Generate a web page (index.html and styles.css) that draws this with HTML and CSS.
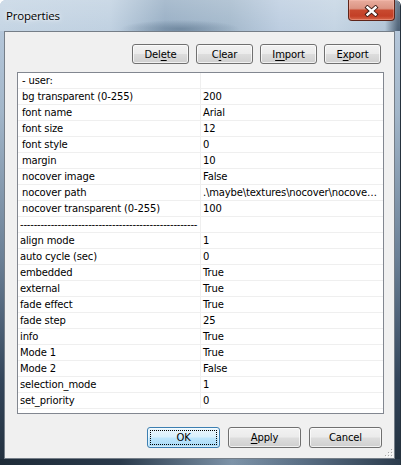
FILE: index.html
```html
<!DOCTYPE html>
<html>
<head>
<meta charset="utf-8">
<link rel="stylesheet" href="styles.css">
</head>
<body>
<div class="window">
  <div class="titlebar">
    <span class="title">Properties</span>
    <div class="close">
      <svg width="15" height="12" viewBox="0 0 15 12">
        <path d="M3.5 2.5 L11.5 9.5 M11.5 2.5 L3.5 9.5" stroke="#3a1a14" stroke-width="4.2" stroke-linecap="square" fill="none"/>
        <path d="M3.5 2.5 L11.5 9.5 M11.5 2.5 L3.5 9.5" stroke="#ffffff" stroke-width="2.4" stroke-linecap="square" fill="none"/>
      </svg>
    </div>
  </div>
  <div class="client">
    <div class="toolbar">
      <button class="btn">Del<u>e</u>te</button>
      <button class="btn">C<u>l</u>ear</button>
      <button class="btn">I<u>m</u>port</button>
      <button class="btn">E<u>x</u>port</button>
    </div>
    <div class="list">
      <div class="row"><div class="key">- user:</div><div class="val"></div></div>
      <div class="row"><div class="key">bg transparent (0-255)</div><div class="val">200</div></div>
      <div class="row"><div class="key">font name</div><div class="val">Arial</div></div>
      <div class="row"><div class="key">font size</div><div class="val">12</div></div>
      <div class="row"><div class="key">font style</div><div class="val">0</div></div>
      <div class="row"><div class="key">margin</div><div class="val">10</div></div>
      <div class="row"><div class="key">nocover image</div><div class="val">False</div></div>
      <div class="row"><div class="key">nocover path</div><div class="val">.\maybe\textures\nocover\nocove…</div></div>
      <div class="row"><div class="key">nocover transparent (0-255)</div><div class="val">100</div></div>
      <div class="row"><div class="key dash">----------------------------------------------------</div><div class="val"></div></div>
      <div class="row g2"><div class="key">align mode</div><div class="val">1</div></div>
      <div class="row g2"><div class="key">auto cycle (sec)</div><div class="val">0</div></div>
      <div class="row g2"><div class="key">embedded</div><div class="val">True</div></div>
      <div class="row g2"><div class="key">external</div><div class="val">True</div></div>
      <div class="row g2"><div class="key">fade effect</div><div class="val">True</div></div>
      <div class="row g2"><div class="key">fade step</div><div class="val">25</div></div>
      <div class="row g2"><div class="key">info</div><div class="val">True</div></div>
      <div class="row g2"><div class="key">Mode 1</div><div class="val">True</div></div>
      <div class="row g2"><div class="key">Mode 2</div><div class="val">False</div></div>
      <div class="row g2"><div class="key">selection_mode</div><div class="val">1</div></div>
      <div class="row g2"><div class="key">set_priority</div><div class="val">0</div></div>
    </div>
    <div class="footer">
      <button class="btn wide default"><span class="focus">OK</span></button>
      <button class="btn wide"><u>A</u>pply</button>
      <button class="btn wide">Cancel</button>
    </div>
    <svg class="grip" width="9" height="9" viewBox="0 0 9 9">
      <rect x="7" y="1" width="1" height="1" fill="#a6a6a6"/>
      <rect x="4" y="4" width="1" height="1" fill="#a6a6a6"/>
      <rect x="7" y="4" width="1" height="1" fill="#a6a6a6"/>
      <rect x="1" y="7" width="1" height="1" fill="#a6a6a6"/>
      <rect x="4" y="7" width="1" height="1" fill="#a6a6a6"/>
      <rect x="7" y="7" width="1" height="1" fill="#a6a6a6"/>
      <rect x="8" y="2" width="1" height="1" fill="#ffffff"/>
      <rect x="5" y="5" width="1" height="1" fill="#ffffff"/>
      <rect x="8" y="5" width="1" height="1" fill="#ffffff"/>
      <rect x="2" y="8" width="1" height="1" fill="#ffffff"/>
      <rect x="5" y="8" width="1" height="1" fill="#ffffff"/>
      <rect x="8" y="8" width="1" height="1" fill="#ffffff"/>
    </svg>
  </div>
</div>
</body>
</html>
```
FILE: styles.css
```css
* { box-sizing: border-box; }
html, body { margin: 0; padding: 0; }
body {
  background: #ffffff;
  width: 405px;
  height: 465px;
  overflow: hidden;
  font-family: "DejaVu Sans", "Liberation Sans", sans-serif;
}
.window {
  width: 401px;
  height: 465px;
  display: flex;
  flex-direction: column;
  border-radius: 6px 6px 0 0;
  border-right: 1px solid #26333f;
  background:
    linear-gradient(to right, #1e2b38 0, #2a3a4b 30%, #7d93a8 58%, #5b7086 75%, #2c3c4d 100%) left bottom / 100% 6px no-repeat,
    linear-gradient(to bottom, #bccde0 0, #a3b7ca 110px, #6a7f95 260px, #33455a 380px, #22303e 465px);
}
.titlebar {
  height: 31px;
  flex: none;
  display: flex;
  align-items: flex-start;
  padding: 0 5px 0 6px;
  border-radius: 6px 6px 0 0;
  background:
    radial-gradient(ellipse 60px 9px at 180px 29px, rgba(80,105,130,0.55), rgba(80,105,130,0)),
    linear-gradient(to bottom, rgba(255,255,255,0.18), rgba(255,255,255,0)),
    linear-gradient(to right, #c5d5e4 0, #c0d1e1 110px, #97aec4 165px, #a4b9cc 230px, #bccde0 280px, #c4d4e3 335px, #b2c5d7 385px, #4f6378 398px);
}
.title {
  margin-top: 8px;
  font-family: "Open Sans", "Noto Sans", sans-serif;
  font-size: 11.5px;
  letter-spacing: -0.2px;
  color: #000;
  text-shadow: 0 0 6px rgba(255,255,255,0.9), 0 0 3px rgba(255,255,255,0.8);
}
.close {
  margin-left: auto;
  width: 47px;
  height: 21px;
  border: 1px solid #5e2419;
  border-top: none;
  border-radius: 0 0 4px 4px;
  background: linear-gradient(to bottom, #e9ad9e 0%, #db9483 42%, #c8492f 52%, #c33f26 80%, #d7664a 100%);
  box-shadow: inset 0 0 0 1px rgba(255,200,190,0.35);
  display: flex;
  align-items: center;
  justify-content: center;
  padding-top: 1px;
}
.close svg { display: block; }
.client {
  flex: none;
  height: 428px;
  margin: 0 5px 0 4px;
  border: 1px solid rgba(35,50,66,0.6);
  background: #f0f0f0;
  display: flex;
  flex-direction: column;
  position: relative;
}
.toolbar {
  display: flex;
  justify-content: flex-end;
  gap: 7px;
  padding: 12px 13px 0 0;
}
.btn {
  width: 57px;
  height: 20px;
  margin: 0;
  padding: 0;
  border: 1px solid #707070;
  border-radius: 3px;
  background: linear-gradient(to bottom, #f2f2f2 0%, #ebebeb 48%, #dddddd 52%, #cfcfcf 100%);
  box-shadow: inset 0 0 0 1px rgba(255,255,255,0.7);
  font-family: "DejaVu Sans", sans-serif;
  font-size: 10px;
  letter-spacing: -0.15px;
  color: #000;
  line-height: 16px;
  padding-top: 1px;
}
.btn u { text-decoration: underline; text-underline-offset: 2px; }
.btn.wide { width: 73px; height: 21px; }
.btn.default {
  border-color: #3c7fb1;
  background: linear-gradient(to bottom, #eaf6fd 0%, #d9f0fc 48%, #bee6fd 52%, #a7d9f5 100%);
  box-shadow: inset 0 0 0 1px rgba(255,255,255,0.5);
  padding: 2px;
}
.focus {
  display: block;
  height: 100%;
  border: 1px dotted #000;
  line-height: 13px;
}
.list {
  margin: 8px 10px 0 12px;
  height: 342px;
  flex: none;
  background: #ffffff;
  border: 1px solid #828790;
  overflow: hidden;
}
.row {
  display: grid;
  grid-template-columns: 183px 1fr;
  height: 16px;
  border-bottom: 1px solid #efefef;
  font-size: 10px;
  letter-spacing: -0.15px;
  line-height: 15px;
  color: #000;
}
.key {
  border-right: 1px solid #efefef;
  padding-left: 4px;
  white-space: nowrap;
  overflow: hidden;
}
.row.g2 .key { padding-left: 2px; }
.key.dash { padding-left: 2px; letter-spacing: -0.2px; }
.val {
  padding-left: 2px;
  white-space: nowrap;
  overflow: hidden;
}
.footer {
  display: flex;
  justify-content: flex-end;
  gap: 8px;
  padding: 13px 12px 0 0;
}
.grip {
  position: absolute;
  right: 1px;
  bottom: 1px;
}
```
